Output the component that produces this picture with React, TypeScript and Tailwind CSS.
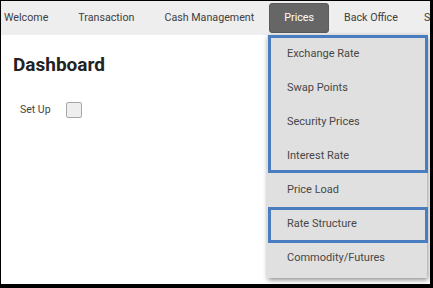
import React from "react";

const items = [
  "Exchange Rate",
  "Swap Points",
  "Security Prices",
  "Interest Rate",
];

function Item({ label }: { label: string }) {
  return (
    <div className="h-[34px] flex items-center pl-[20px] text-[11px] text-[#474747]">
      {label}
    </div>
  );
}

export default function App() {
  return (
    <div
      className="relative w-[433px] h-[288px] bg-white overflow-hidden border-black border-l border-t border-r-[3px] border-b-[4px]"
      style={{ fontFamily: "Roboto, 'Liberation Sans', sans-serif" }}
    >
      <nav className="h-[34px] bg-[#eeeeee] flex items-center text-[10.7px] text-[#404040] whitespace-nowrap">
        <span className="pl-[3px] pr-[15px]">Welcome</span>
        <span className="px-[15px]">Transaction</span>
        <span className="px-[15px]">Cash Management</span>
        <span className="px-[14px] h-[30px] flex items-center bg-[#666666] text-white rounded-[3px] border border-[#5a5a5a]">
          Prices
        </span>
        <span className="px-[15px]">Back Office</span>
        <span className="pl-[11px]">Static</span>
      </nav>

      <div className="pl-[12px] pt-[18px]">
        <h1 className="text-[19px] leading-[24px] font-bold text-[#222222]">Dashboard</h1>
        <div className="flex items-center mt-[25px] pl-[7px] h-[16px]">
          <span className="w-[46px] text-[10.5px] text-[#444444]">Set Up</span>
          <span className="w-[16px] h-[16px] bg-[#eeeeee] border border-[#a8a8a8] rounded-[2px]" />
        </div>
      </div>

      <div className="absolute left-[266px] top-[34px] w-[160px] bg-[#e0e0e0] pt-[2px] pb-[3px] shadow-[1px_2px_5px_rgba(0,0,0,0.45)]">
        <div className="relative">
          {items.map((l) => (
            <Item key={l} label={l} />
          ))}
          <div className="absolute left-[1px] right-[-1px] top-[-2px] bottom-0 border-[3px] border-[#4a7dbf]" />
        </div>
        <Item label="Price Load" />
        <div className="relative">
          <Item label="Rate Structure" />
          <div className="absolute left-[1px] right-[-1px] top-[0px] bottom-[-2px] border-[3px] border-[#4a7dbf]" />
        </div>
        <Item label="Commodity/Futures" />
      </div>
    </div>
  );
}
